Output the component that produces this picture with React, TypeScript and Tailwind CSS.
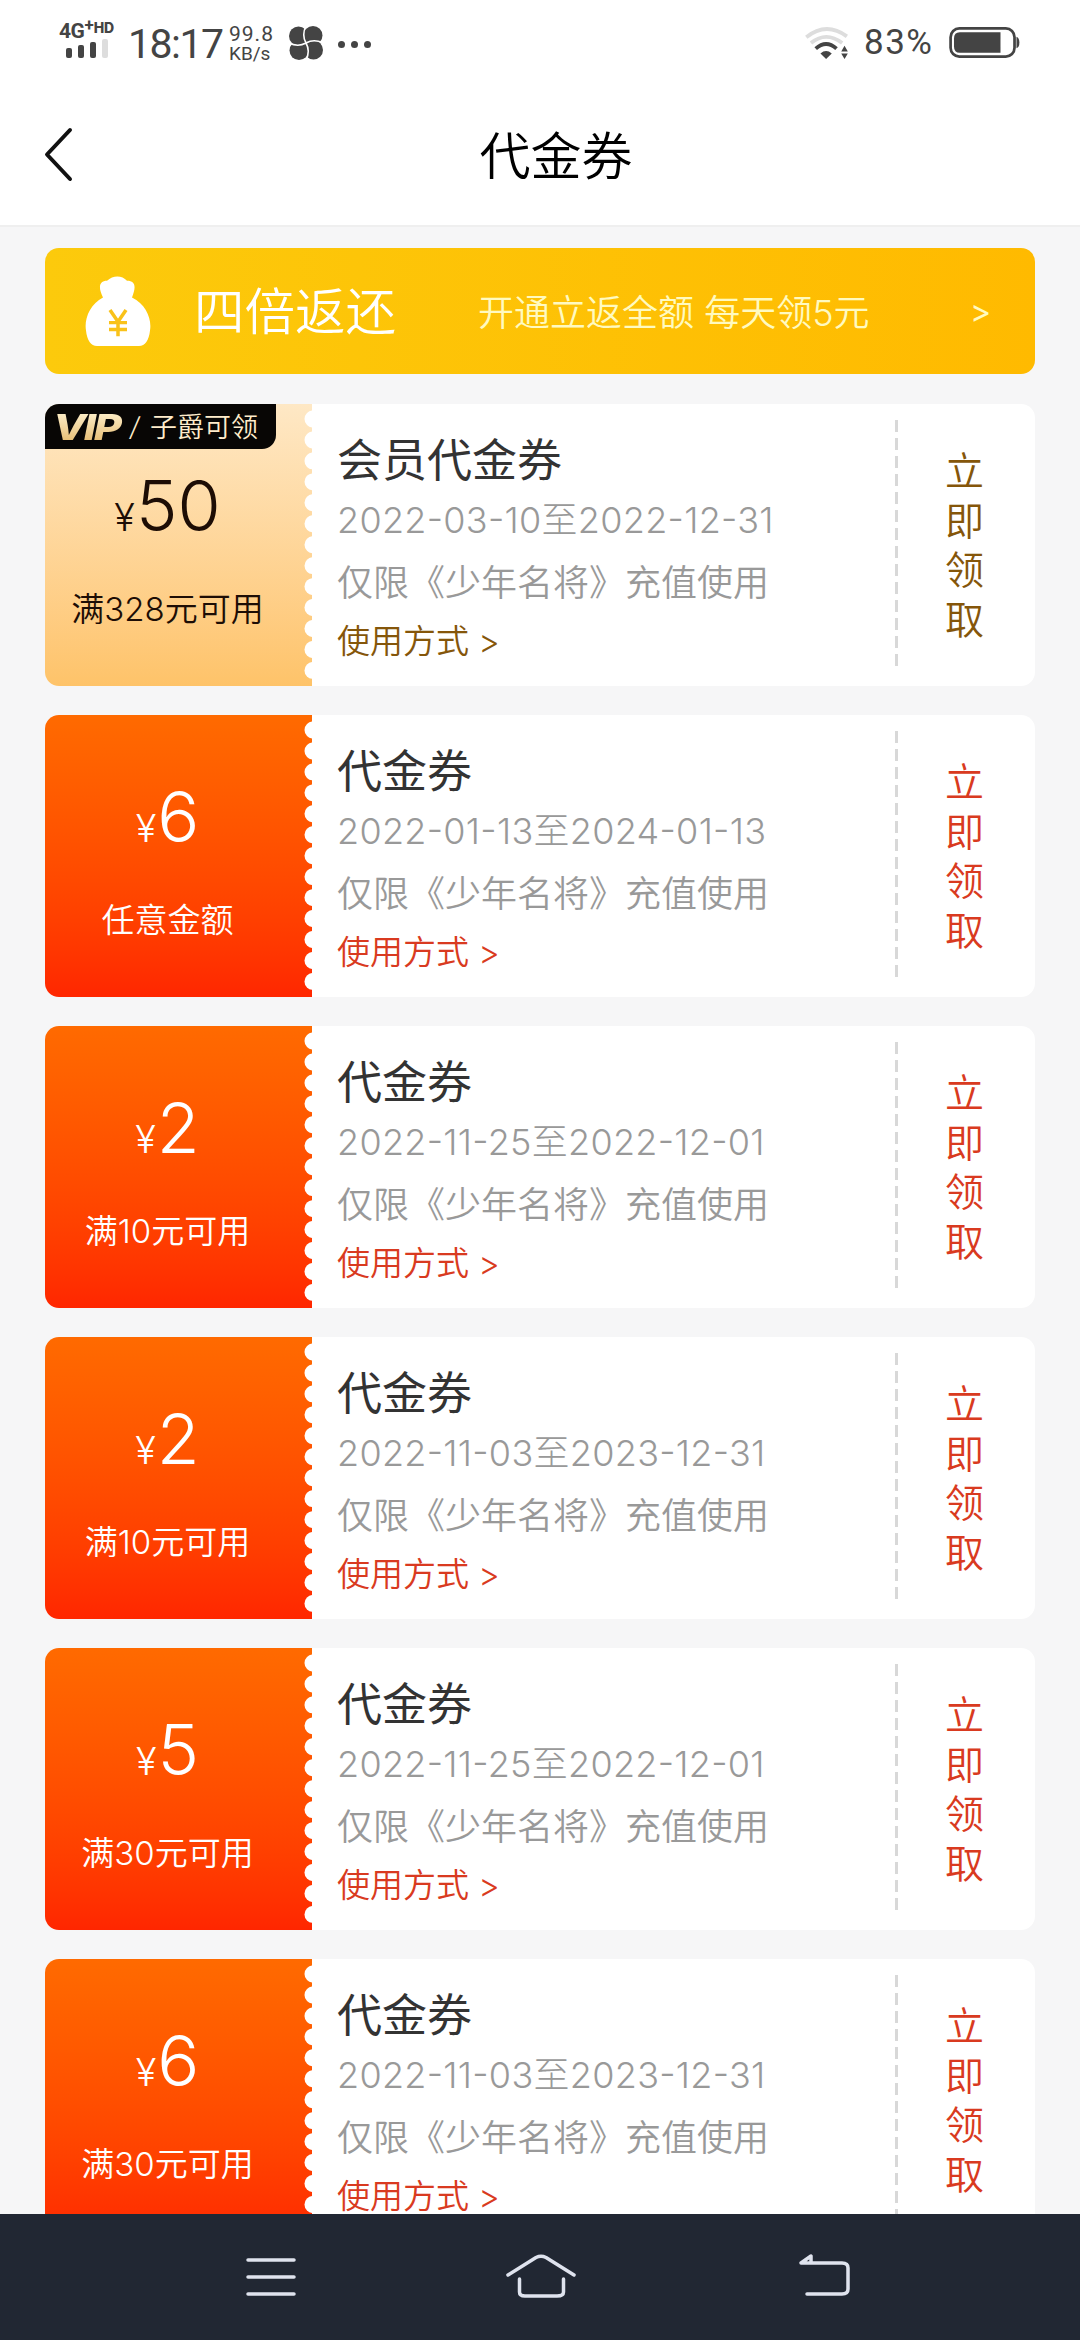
type Coupon = {
  title: string;
  amount: string;
  condition: string;
  period: string;
  vip?: boolean;
};

const coupons: Coupon[] = [
  { title: "会员代金券", amount: "50", condition: "满328元可用", period: "2022-03-10至2022-12-31", vip: true },
  { title: "代金券", amount: "6", condition: "任意金额", period: "2022-01-13至2024-01-13" },
  { title: "代金券", amount: "2", condition: "满10元可用", period: "2022-11-25至2022-12-01" },
  { title: "代金券", amount: "2", condition: "满10元可用", period: "2022-11-03至2023-12-31" },
  { title: "代金券", amount: "5", condition: "满30元可用", period: "2022-11-25至2022-12-01" },
  { title: "代金券", amount: "6", condition: "满30元可用", period: "2022-11-03至2023-12-31" },
];

const scallops = Array.from({ length: 13 }, (_, i) => 15 + i * 20.95);

const StatusBar = () => (
  <div className="flex h-[88px] items-center justify-between pl-[59px] pr-[59px] text-[#444]">
    <div className="flex items-center">
      <div className="-mt-[9px] flex w-[60px] flex-col">
        <div className="flex h-[18px] items-start font-bold leading-none">
          <span className="font-['Roboto'] text-[21px] tracking-[-0.5px]">4G</span>
          <span className="-mt-[4px] font-['Roboto'] text-[17px]">+</span>
          <span className="font-['Inter'] text-[14px] font-extrabold">HD</span>
        </div>
        <div className="ml-[7px] flex h-[19px] items-end gap-[6px]">
          <i className="h-[10px] w-[6px] rounded-[2px] bg-[#444]" />
          <i className="h-[13px] w-[6px] rounded-[2px] bg-[#444]" />
          <i className="h-[16px] w-[6px] rounded-[2px] bg-[#444]" />
          <i className="h-[19px] w-[6px] rounded-[2px] bg-[#ddd]" />
        </div>
      </div>
      <span className="ml-[9px] w-[101px] font-['Roboto'] text-[41px] leading-none tracking-[-1.500px]">18:17</span>
      <div className="flex w-[60px] flex-col font-['Roboto'] text-[21px] leading-[19px]">
        <span className="tracking-[1px]">99.8</span>
        <span className="text-[19px]">KB/s</span>
      </div>
      <svg className="-mt-[2px] h-[34px] w-[34px]" viewBox="0 0 34 34">
        <g fill="#444">
          <circle cx="9.500" cy="10" r="9.500" />
          <circle cx="24" cy="9.500" r="9.500" />
          <circle cx="24.500" cy="24" r="9.500" />
          <circle cx="10" cy="24.500" r="9.500" />
          <rect x="10" y="10" width="14" height="14" />
        </g>
        <path d="M17 0Q12.500 9 17 17Q21.500 25 17 34M0 17Q9 21.500 17 17Q25 12.500 34 17" fill="none" stroke="#fff" strokeWidth="1.600" />
      </svg>
      <div className="ml-[15px] flex gap-[6px]">
        <i className="size-[7px] rounded-full bg-[#444]" />
        <i className="size-[7px] rounded-full bg-[#444]" />
        <i className="size-[7px] rounded-full bg-[#444]" />
      </div>
    </div>
    <div className="-mt-[3px] flex items-center">
      <svg className="h-[34px] w-[48px]" viewBox="0 0 48 36" fill="none" strokeWidth="4">
        <path d="M1 12Q22-5 44 11" stroke="#ddd" />
        <path d="M6 18Q22 5 39 18" stroke="#ddd" />
        <path d="M11 24Q22 14 33 24" stroke="#444" />
        <path d="M16 29q6-5 12 0l-6 6z" fill="#444" />
        <path d="M38 27l3.500-6 3.500 6zM38 29l3.500 6 3.500-6z" fill="#444" />
      </svg>
      <span className="ml-[12px] w-[84px] font-['Roboto'] text-[35px] leading-none tracking-[1.500px]">83%</span>
      <svg className="h-[31px] w-[73px]" viewBox="0 0 73 32">
        <rect x="1.500" y="1.500" width="66" height="29" rx="9" fill="none" stroke="#444" strokeWidth="2.800" />
        <path d="M11 5.500H53V26.500H11Q5 26.500 5 20V12Q5 5.500 11 5.500z" fill="#444" />
        <path d="M69.500 10q3 1 3 6t-3 6z" fill="#444" />
      </svg>
    </div>
  </div>
);

const Header = () => (
  <div className="grid h-[139px] grid-cols-3 items-center border-b-2 border-[#efefef]">
    <svg className="-mt-[4px] ml-[44px] h-[55px] w-[30px]" viewBox="0 0 30 55" fill="none" stroke="#111" strokeWidth="4" strokeLinecap="round" strokeLinejoin="round">
      <path d="M26 3L3 27.500L26 52" />
    </svg>
    <h1 className="translate-x-[16px] text-center text-[51px] font-[350] leading-none text-black">代金券</h1>
  </div>
);

const Banner = () => (
  <div className="flex h-[126px] shrink-0 items-center rounded-[14px] bg-linear-to-r from-[#fcca0c] to-[#ffba00] pl-[40px] text-white">
    <svg className="h-[70px] w-[66px]" viewBox="0 0 66 72" fill="#fff" preserveAspectRatio="none">
      <path d="M18 22C13 12 14 5 22 5C28-1 37-1 42 5C51 5 51 12 47 22C61 29 67 44 65 56C64 66 60 72 54 72H12C6 72 2 66 1 56C-1 44 5 29 18 22z" />
      <path d="M25 35l8 12 8-12M33 47V62M24 48h18M24 55h18" fill="none" stroke="#f9c21a" strokeWidth="3.500" />
    </svg>
    <span className="ml-[43px] w-[284px] pt-[3px] text-[50.500px] font-[350] leading-none">四倍返还</span>
    <span className="w-[492px] pt-[3px] text-[36px] font-[350] leading-none text-[#fffac0]">开通立返全额 每天领5元</span>
    <span className="pt-[2px] font-['Inter'] text-[32px] font-normal leading-none text-[#fffac0]">&gt;</span>
  </div>
);

const VipBadge = () => (
  <div className="absolute left-0 top-0 flex h-[45px] w-[231px] items-center rounded-br-[14px] bg-[#080605] pl-[8px] text-[#ffeccb]">
    <span className="w-[60px] origin-left scale-x-120 bg-linear-to-b from-[#fff3d2] to-[#e5b869] bg-clip-text font-['Inter'] text-[36px] font-extrabold italic leading-none tracking-[-2px] text-transparent">VIP</span>
    <span className="ml-[17px] w-[20px] font-['Inter'] text-[26px] font-light italic leading-none">/</span>
    <span className="pt-px text-[27px] font-[350] leading-none">子爵可领</span>
  </div>
);

const CouponCard = ({ title, amount, condition, period, vip }: Coupon) => (
  <div className="flex h-[282px] shrink-0 overflow-hidden rounded-[14px] bg-white">
    <div
      className={`relative flex w-[267px] flex-col items-center pr-[22px] ${
        vip ? "bg-linear-to-b from-[#fee8c5] to-[#fec369] text-[#1d0d05]" : "bg-linear-to-b from-[#ff6a00] to-[#ff2600] text-white"
      }`}
    >
      {vip && <VipBadge />}
      <div className="mt-[60px] flex h-[84px] items-baseline gap-px font-['Inter'] font-[350] leading-[84px]">
        <span className="text-[38px]">¥</span>
        <span className="text-[70px] font-light">{amount}</span>
      </div>
      <p className="mt-[36px] text-[33px] font-[350] leading-[50px]">{condition}</p>
      <svg className="absolute right-0 top-0 h-[282px] w-[8px]" viewBox="0 0 8 282" fill="#fff">
        {scallops.map((y) => (
          <circle key={y} cx="9" cy={y} r="8.500" />
        ))}
      </svg>
    </div>
    <div className="flex w-[583px] flex-col pl-[25px] pt-[27px] text-[36px] font-[350] text-[#999]">
      <h2 className="h-[60px] text-[45px] font-normal leading-[60px] text-[#333]">{title}</h2>
      <p className="h-[59px] font-light leading-[59px] tracking-[0.3px] [font-feature-settings:'case']">{period}</p>
      <p className="h-[66px] leading-[66px]">仅限《少年名将》充值使用</p>
      <p className={`h-[50px] text-[33px] leading-[50px] ${vip ? "text-[#85560a]" : "text-[#d93a20]"}`}>使用方式 &gt;</p>
    </div>
    <div className="my-4 w-[3px] bg-[repeating-linear-gradient(#d8d8d8_0_12px,transparent_12px_18px)]" />
    <button
      className={`flex flex-1 flex-col items-center justify-center pr-[4px] text-[39px] font-[350] leading-[49.500px] ${
        vip ? "text-[#85560a]" : "text-[#d93a20]"
      }`}
    >
      {"立即领取".split("").map((char) => (
        <span key={char}>{char}</span>
      ))}
    </button>
  </div>
);

const NavBar = () => (
  <div className="h-[126px] bg-[#212733]">
    <svg className="h-full w-full" viewBox="0 0 1080 126" fill="none" stroke="#dfe3ee" strokeWidth="3.500" strokeLinecap="round" strokeLinejoin="round">
      <path d="M248 46H294M248 63H294M248 80H294" />
      <path d="M508 61L536 43.500Q541 41 546 43.500L574 61M519.500 65V78Q519.500 82 525 82H557Q563.500 82 563.500 78V65" />
      <path d="M807 80H842Q848 80 848 75V54Q848 49 842 49H801L811 42V48" />
    </svg>
  </div>
);

const App = () => {
  return (
    <div className="flex h-[2340px] w-[1080px] flex-col overflow-hidden bg-[#f6f6f7] font-['Inter','Noto_Sans_CJK_SC',sans-serif]">
      <div className="bg-white">
        <StatusBar />
        <Header />
      </div>
      <div className="flex min-h-0 flex-1 flex-col overflow-hidden px-[45px] pt-[21px]">
        <Banner />
        <div className="mt-[30px] flex flex-col gap-[29px]">
          {coupons.map((coupon, i) => (
            <CouponCard key={i} {...coupon} />
          ))}
        </div>
      </div>
      <NavBar />
    </div>
  );
};

export default App;
